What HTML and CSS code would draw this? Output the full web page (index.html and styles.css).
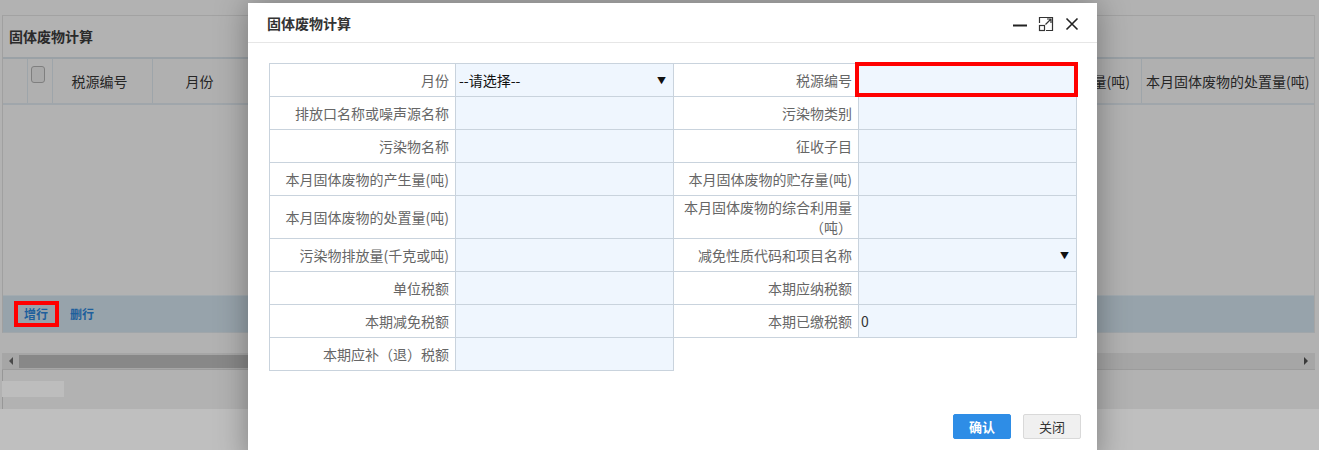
FILE: index.html
```html
<!DOCTYPE html>
<html lang="zh-CN">
<head>
    <meta charset="UTF-8">
    <title>固体废物计算</title>
    <link rel="stylesheet" href="styles.css">
</head>
<body>
<div class="app">
    <div class="panel">
        <div class="panel-title">固体废物计算</div>
        <div class="grid-head">
            <div class="hc hc-num"></div>
            <div class="hc hc-chk"><span class="chk"></span></div>
            <div class="hc hc-w100">税源编号</div>
            <div class="hc hc-w100">月份</div>
            <div class="hc hc-fill">本月固体废物的综合利用量(吨)</div>
            <div class="hc hc-last">本月固体废物的处置量(吨)</div>
        </div>
        <div class="grid-body"></div>
        <div class="toolbar">
            <a class="tool tool-mark">增行</a>
            <a class="tool">删行</a>
        </div>
    </div>
    <div class="hscroll">
        <span class="arr arr-l"></span>
        <span class="thumb"></span>
        <span class="arr arr-r"></span>
    </div>
    <div class="pager"><span class="pager-box"></span></div>
    <div class="footer"></div>
</div>

<div class="dialog">
    <div class="dlg-head">
        <span class="dlg-title">固体废物计算</span>
        <span class="dlg-tools">
            <svg class="ico" width="16" height="16" viewBox="0 0 16 16"><path d="M1 9.5H15" stroke="#222" stroke-width="2"/></svg>
            <svg class="ico" width="16" height="16" viewBox="0 0 16 16" fill="none" stroke="#333" stroke-width="1.2">
                <path d="M1.5 7V1.5H14.5V14.5H8"/>
                <rect x="1.5" y="9.5" width="5" height="5"/>
                <path d="M7.5 8.5L13 3M9 3H13V7"/>
            </svg>
            <svg class="ico" width="16" height="16" viewBox="0 0 16 16"><path d="M2.5 2.5L13.5 13.5M13.5 2.5L2.5 13.5" stroke="#222" stroke-width="1.6"/></svg>
        </span>
    </div>
    <div class="dlg-body">
        <table class="form">
            <colgroup>
                <col style="width:186px">
                <col style="width:218px">
                <col style="width:185px">
                <col style="width:218px">
            </colgroup>
            <tr>
                <td class="lbl">月份</td>
                <td class="val"><div class="sel"><span>--请选择--</span><span class="caret">▼</span></div></td>
                <td class="lbl">税源编号</td>
                <td class="val val-mark"><span class="mark"></span></td>
            </tr>
            <tr>
                <td class="lbl">排放口名称或噪声源名称</td>
                <td class="val"></td>
                <td class="lbl">污染物类别</td>
                <td class="val"></td>
            </tr>
            <tr>
                <td class="lbl">污染物名称</td>
                <td class="val"></td>
                <td class="lbl">征收子目</td>
                <td class="val"></td>
            </tr>
            <tr>
                <td class="lbl">本月固体废物的产生量(吨)</td>
                <td class="val"></td>
                <td class="lbl">本月固体废物的贮存量(吨)</td>
                <td class="val"></td>
            </tr>
            <tr class="tall">
                <td class="lbl">本月固体废物的处置量(吨)</td>
                <td class="val"></td>
                <td class="lbl lbl-2">本月固体废物的综合利用量<br><span class="fw">（吨）</span></td>
                <td class="val"></td>
            </tr>
            <tr>
                <td class="lbl">污染物排放量(千克或吨)</td>
                <td class="val"></td>
                <td class="lbl">减免性质代码和项目名称</td>
                <td class="val"><div class="sel"><span></span><span class="caret">▼</span></div></td>
            </tr>
            <tr>
                <td class="lbl">单位税额</td>
                <td class="val"></td>
                <td class="lbl">本期应纳税额</td>
                <td class="val"></td>
            </tr>
            <tr>
                <td class="lbl">本期减免税额</td>
                <td class="val"></td>
                <td class="lbl">本期已缴税额</td>
                <td class="val val-num">0</td>
            </tr>
            <tr>
                <td class="lbl"><span class="fw">本期应补（退）税额</span></td>
                <td class="val"></td>
                <td class="empty"></td>
                <td class="empty"></td>
            </tr>
        </table>
        <div class="dlg-btns">
            <a class="btn btn-ok">确认</a>
            <a class="btn">关闭</a>
        </div>
    </div>
</div>
</body>
</html>
```

FILE: styles.css
```css
* {
    margin: 0;
    padding: 0;
    box-sizing: border-box;
}

body {
    width: 1319px;
    height: 450px;
    overflow: hidden;
    position: relative;
    background-color: #b2b2b2;
    font-family: "Noto Sans CJK SC", "Noto Sans", sans-serif;
    font-size: 14px;
    color: #262626;
    text-spacing-trim: space-all;
}

.app {
    padding-top: 15px;
}

.panel {
    width: 1313px;
    margin-left: 2px;
    border-top: 1px solid #a2a2a2;
    border-left: 1px solid #a0a0a0;
    border-right: 1px solid #a5a5a5;
    border-bottom: 1px solid #a0a6aa;
}

.panel-title {
    height: 41px;
    line-height: 40px;
    padding-left: 6px;
    font-weight: bold;
    color: #2a2a2a;
}

.grid-head {
    display: flex;
    height: 48px;
    border-top: 2px solid #9aa1a6;
    border-bottom: 2px solid #a0a6ab;
    background-color: #b0b0b0;
}

.hc {
    height: 100%;
    border-right: 1px solid #9ea5aa;
    display: flex;
    align-items: center;
    justify-content: center;
    white-space: nowrap;
    overflow: hidden;
}

.hc-num {
    width: 25px;
}

.hc-chk {
    width: 25px;
    align-items: flex-start;
    justify-content: flex-start;
    padding: 7px 0 0 3px;
}

.chk {
    width: 14px;
    height: 17px;
    border: 1px solid #7f7f7f;
    border-radius: 3px;
    background-color: #a9a9a9;
}

.hc-w100 {
    width: 100px;
    padding-right: 6px;
}

.hc-fill {
    flex: 1;
    justify-content: flex-end;
    padding-right: 11px;
}

.hc-last {
    width: 172px;
    border-right: none;
    justify-content: flex-start;
    padding-left: 4px;
}

.grid-body {
    height: 190px;
}

.toolbar {
    height: 37px;
    background-color: #97a3ab;
    border-top: 1px solid #a3abb0;
    display: flex;
    align-items: center;
    padding-left: 11px;
    gap: 1px;
}

.tool {
    font-size: 12px;
    font-weight: bold;
    color: #1e5f9c;
    padding: 0 6px;
    line-height: 18px;
    border: 4px solid transparent;
}

.tool-mark {
    border-color: #ff0000;
    padding: 0 7px 0 6px;
}

.hscroll {
    margin: 20px 4px 0 2px;
    height: 17px;
    background-color: #a6a6a6;
    display: flex;
    align-items: center;
    border-bottom: 1px solid #9c9c9c;
}

.arr {
    width: 0;
    height: 0;
    border-top: 4px solid transparent;
    border-bottom: 4px solid transparent;
}

.arr-l {
    margin-left: 7px;
    border-right: 4px solid #4a4a4a;
}

.arr-r {
    margin: 0 7px 0 auto;
    border-left: 4px solid #3a3a3a;
}

.thumb {
    width: 1000px;
    height: 13px;
    margin-left: 6px;
    background-color: #888888;
}

.pager {
    height: 39px;
    margin-left: 2px;
    border-left: 1px solid #979797;
    padding-top: 11px;
}

.pager-box {
    display: block;
    width: 62px;
    height: 16px;
    background-color: #bdbdbd;
    margin-left: -1px;
}

.footer {
    height: 42px;
    background-color: #bfbfbf;
}

/* 弹窗 */
.dialog {
    position: absolute;
    left: 248px;
    top: 3px;
    width: 849px;
    height: 460px;
    background-color: #ffffff;
    box-shadow: 0 0 30px rgba(0, 0, 0, 0.35);
}

.dlg-head {
    height: 40px;
    border-bottom: 1px solid #e6e6e6;
    display: flex;
    align-items: center;
    padding: 0 17px 0 19px;
}

.dlg-title {
    font-size: 14px;
    font-weight: bold;
    color: #333;
}

.dlg-tools {
    margin-left: auto;
    display: flex;
    gap: 10px;
    padding-top: 3px;
}

.ico {
    display: block;
}

.dlg-body {
    padding: 20px 0 0 21px;
}

.form {
    border-collapse: collapse;
    table-layout: fixed;
    width: 808px;
}

.form td {
    height: 33px;
    border: 1px solid #c9d3dd;
    padding: 0;
    white-space: nowrap;
}

.form .tall td {
    height: 43px;
}

.lbl {
    text-align: right;
    padding-right: 6px !important;
    color: #666;
}

.lbl-2 {
    line-height: 20px;
}

/* 全角括号 */
.fw {
    font-feature-settings: "fwid";
    font-variant-east-asian: full-width;
}

.val {
    background-color: #eff6fe;
}

.val-mark {
    position: relative;
}

.mark {
    position: absolute;
    left: -4px;
    right: -2px;
    top: -2px;
    bottom: -1px;
    border: 4px solid #ff0000;
}

.val-num {
    padding-left: 2px !important;
    color: #333;
}

.sel {
    display: flex;
    justify-content: space-between;
    align-items: center;
    padding: 0 7px 0 3px;
    color: #111;
}

.caret {
    font-size: 9px;
    color: #111;
}

.form td.empty {
    border: none;
}

.dlg-btns {
    display: flex;
    justify-content: flex-end;
    gap: 12px;
    margin-top: 43px;
    padding-right: 16px;
}

.btn {
    width: 58px;
    height: 25px;
    line-height: 23px;
    text-align: center;
    font-size: 13px;
    color: #333;
    background-color: #f0f0f0;
    border: 1px solid #d9d9d9;
    border-radius: 2px;
}

.btn-ok {
    color: #fff;
    background-color: #2e8de6;
    border-color: #2e8de6;
    font-weight: bold;
}
```
